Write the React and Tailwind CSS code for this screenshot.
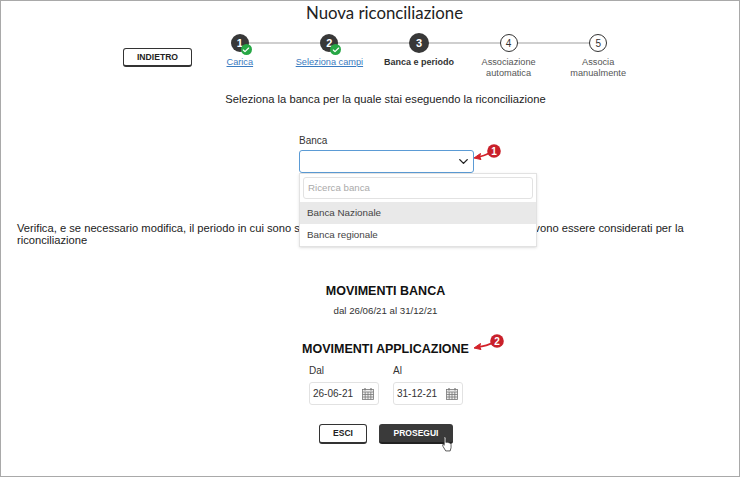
import { Check, ChevronDown } from "lucide-react";

const arial = "font-['Liberation_Sans',Arial,sans-serif]";

const steps = [
  { n: 1, label: "Carica", state: "done" },
  { n: 2, label: "Seleziona campi", state: "done" },
  { n: 3, label: "Banca e periodo", state: "current" },
  { n: 4, label: "Associazione automatica", state: "todo" },
  { n: 5, label: "Associa manualmente", state: "todo" },
];

function Step({ step }) {
  return (
    <div className="relative z-10 flex flex-col items-center">
      <div className="flex h-[22px] items-center">
        {step.state === "todo" ? (
          <div className="flex h-[18px] w-[18px] items-center justify-center rounded-full border border-[#333] bg-white text-[10px] text-[#333]">
            {step.n}
          </div>
        ) : (
          <div
            className={`relative flex items-center justify-center rounded-full bg-[#383838] text-[11px] font-bold text-white ${
              step.state === "current" ? "h-5 w-5" : "h-[18px] w-[18px]"
            }`}
          >
            {step.n}
            {step.state === "done" && (
              <span className="absolute -bottom-[3px] -right-[3px] flex h-[11px] w-[11px] items-center justify-center rounded-full bg-[#27a745]">
                <Check size={8} strokeWidth={3.5} className="text-white" />
              </span>
            )}
          </div>
        )}
      </div>
      {step.state === "done" && (
        <a className="mt-[3px] text-[9.2px] leading-[11px] text-[#3a7bc0] underline">{step.label}</a>
      )}
      {step.state === "current" && (
        <span className="mt-[3px] text-[9px] font-bold leading-[11px] text-[#333]">{step.label}</span>
      )}
      {step.state === "todo" && (
        <span className="mt-[3px] w-[70px] text-center text-[9.2px] leading-[11px] text-[#555]">{step.label}</span>
      )}
    </div>
  );
}

function DateField({ label, value }) {
  return (
    <div className="w-[70px]">
      <div className="text-[10px] leading-[12px] text-[#333]">{label}</div>
      <div className="mt-[5px] flex h-[23px] items-center justify-between rounded-[3px] border border-[#e2e2e2] pl-[3px] pr-[4px] text-[10px] text-[#333]">
        {value}
        <svg width="12" height="12" viewBox="0 0 12 12" fill="none" stroke="#777" strokeWidth="0.8">
          <rect x="0.5" y="1.5" width="11" height="10" fill="#eee" />
          <path d="M0.5 4h11M0.5 6.5h11M0.5 9h11M3.2 4v7.5M6 4v7.5M8.8 4v7.5" />
          <path d="M3 0v2.5M9 0v2.5" strokeWidth="1.2" />
        </svg>
      </div>
    </div>
  );
}

function Marker({ n, cx, className }) {
  return (
    <svg className={`absolute ${className}`} width="34" height="18" viewBox="0 0 34 18">
      <path d={`M4 13C10 12.500 ${cx - 8} 11 ${cx - 3} 8`} fill="none" stroke="#d3222a" strokeWidth="1.6" />
      <path d="M1 14l6.500-4.500-0.800 3.200 1.300 2.800z" fill="#d3222a" stroke="#d3222a" />
      <circle cx={cx} cy="7" r="6.800" fill="#c9202a" />
      <text x={cx} y="10.500" fontSize="10" fontWeight="700" fill="#fff" textAnchor="middle" fontFamily="Liberation Sans">
        {n}
      </text>
    </svg>
  );
}

export default function App() {
  return (
    <div className={`${arial} relative h-[477px] w-[740px] overflow-hidden border border-[#a9a9a9] bg-white text-[#222]`}>
      <h1 className="h-6 pl-[29px] pt-[1px] text-center font-['Lato',sans-serif] text-[16.800px] leading-[22px] text-[#222]">
        Nuova riconciliazione
      </h1>

      {/* Stepper */}
      <div className="mt-[7px] flex items-start">
        <button className="ml-[122px] mt-[16px] h-[19px] w-[69px] rounded-[3px] border border-[#333] border-b-2 bg-white text-[8.600px] font-bold text-[#222]">
          INDIETRO
        </button>
        <div className="relative ml-[3px] grid w-[448px] grid-cols-5">
          <div className="absolute left-[45px] right-[44px] top-[10px] h-[2px] bg-[#cfcfcf]" />
          {steps.map((s) => (
            <Step key={s.n} step={s} />
          ))}
        </div>
      </div>

      <p className="mt-[13px] pl-[31px] text-center text-[11.200px] leading-[14px]">
        Seleziona la banca per la quale stai eseguendo la riconciliazione
      </p>

      <div className="relative ml-[298px] mt-[29px] w-[175px]">
        <div className="text-[10px] leading-[12px] text-[#333]">Banca</div>
        <div className="mt-[3px] flex h-[23px] items-center justify-end rounded-[3px] border-[1.500px] border-[#5b9bd5] pr-[2px]">
          <ChevronDown size={15} strokeWidth={2.25} className="text-[#222]" />
        </div>
        {/* Dropdown */}
        <div className="absolute left-0 top-[38px] z-20 h-[74px] w-[238px] border border-[#e2e2e2] bg-white shadow-sm">
          <div className="mx-[3px] mt-[3px] flex h-[22px] items-center rounded-[3px] border border-[#e2e2e2] px-1 text-[9.700px] text-[#aaa]">
            Ricerca banca
          </div>
          <div className="mt-[3px] flex h-[22px] items-center bg-[#e9e9e9] px-[7px] text-[9.800px] text-[#444]">
            Banca Nazionale
          </div>
          <div className="flex h-[22px] items-center px-[7px] text-[9.800px] text-[#444]">Banca regionale</div>
        </div>
      </div>

      <p className="mx-[16px] mt-[49px] text-[11.200px] leading-[12px]">
        Verifica, e se necessario modifica, il periodo in cui sono stati registrati i movimenti in applicazione che devono essere considerati per la
        <br />
        riconciliazione
      </p>

      <h2 className="mt-[38px] pl-[31px] text-center text-[12.500px] font-bold leading-[14px] text-[#111]">MOVIMENTI BANCA</h2>
      <p className="mt-[7px] pl-[31px] text-center text-[9.700px] leading-[12px] text-[#333]">dal 26/06/21 al 31/12/21</p>

      <h2 className="mt-[25px] pl-[31px] text-center text-[12.500px] font-bold leading-[14px] text-[#111]">MOVIMENTI APPLICAZIONE</h2>

      <div className="ml-[308px] mt-[9px] flex gap-[14px]">
        <DateField label="Dal" value="26-06-21" />
        <DateField label="Al" value="31-12-21" />
      </div>

      <div className="ml-[318px] mt-[19px] flex gap-[12px]">
        <button className="block h-5 w-[48px] rounded-[3px] border border-b-2 border-[#333] bg-white text-[8.500px] font-bold text-[#222]">
          ESCI
        </button>
        <div className="relative">
          <button className="block h-5 w-[74px] rounded-[3px] border-b-2 border-[#222] bg-[#3a3a3a] text-[8.500px] font-bold text-white">
            PROSEGUI
          </button>
          {/* cursor */}
          <svg className="absolute left-[63px] top-[12px]" width="11" height="16" viewBox="0 0 12 18">
            <path
              d="M3 1.200c.8 0 1.200.5 1.200 1.300v4.700l.9-.3 1 .2 1 .3 1.200.4c1 .3 1.700 1 1.700 2v3.400l-1 3.600H4l-3-5-.5-2c.5-.7 1.400-.3 1.800.6V2.500C1.800 1.700 2.200 1.200 3 1.200z"
              fill="#fff"
              stroke="#333"
              strokeWidth="0.9"
            />
          </svg>
        </div>
      </div>

      <Marker n="1" cx={21} className="left-[472px] top-[143px]" />
      <Marker n="2" cx={24} className="left-[472px] top-[333px]" />
    </div>
  );
}
